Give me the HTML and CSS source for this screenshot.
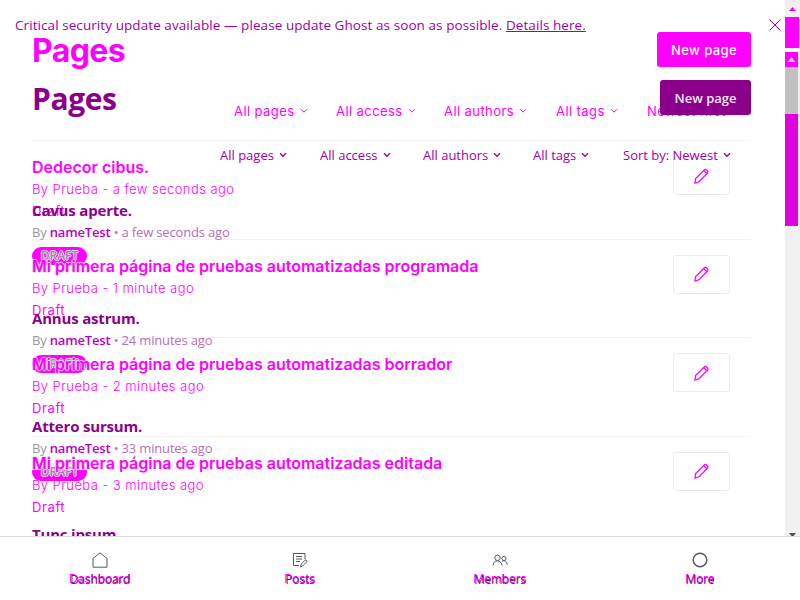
FILE: index.html
```html
<!DOCTYPE html>
<html lang="en">
<head>
<meta charset="utf-8">
<title>Pages</title>
<link rel="stylesheet" href="styles.css">
</head>
<body>
<svg class="defs" width="0" height="0">
  <symbol id="chev" viewBox="0 0 8 6"><path d="M1 1.2 4 4.2 7 1.2"/></symbol>
  <symbol id="pen" viewBox="0 0 18 18"><path d="M2 16l.6-4.500L11.500 2.800c1.200-1.200 4.500 1.800 3.200 3.200L6 14.800zM10.700 3.600 14 6.800"/></symbol>
</svg>
<main class="stage">
  <section class="layer old">
    <header class="head"><h1>Pages</h1><button class="new">New page</button></header>
    <nav class="filters">
      <span>All pages<svg><use href="#chev"/></svg></span>
      <span>All access<svg><use href="#chev"/></svg></span>
      <span>All authors<svg><use href="#chev"/></svg></span>
      <span>All tags<svg><use href="#chev"/></svg></span>
      <span>Newest first</span>
    </nav>
    <ul class="rows">
      <li><div><h3>Dedecor cibus.</h3><p>By Prueba - a few seconds ago</p><p class="state">Draft</p></div><a class="edit"><svg><use href="#pen"/></svg></a></li>
      <li><div><h3><span>Mi prim</span>era página de pruebas automatizadas programada</h3><p>By Prueba - 1 minute ago</p><p class="state">Draft</p></div><a class="edit"><svg><use href="#pen"/></svg></a></li>
      <li><div><h3><span>Mi prim</span>era página de pruebas automatizadas borrador</h3><p>By Prueba - 2 minutes ago</p><p class="state">Draft</p></div><a class="edit"><svg><use href="#pen"/></svg></a></li>
      <li><div><h3><span>Mi prim</span>era página de pruebas automatizadas editada</h3><p>By Prueba - 3 minutes ago</p><p class="state">Draft</p></div><a class="edit"><svg><use href="#pen"/></svg></a></li>
    </ul>
  </section>
  <section class="layer fresh">
    <div class="alert"><p>Critical security update available — please update Ghost as soon as possible. <a>Details here.</a></p><svg class="close" viewBox="0 0 12 12"><path d="M.5.5l11 11M11.5.5l-11 11"/></svg></div>
    <header class="head"><h1>Pages</h1><button class="new">New page</button></header>
    <nav class="filters">
      <span>All pages<svg><use href="#chev"/></svg></span>
      <span>All access<svg><use href="#chev"/></svg></span>
      <span>All authors<svg><use href="#chev"/></svg></span>
      <span>All tags<svg><use href="#chev"/></svg></span>
      <span>Sort by: Newest<svg><use href="#chev"/></svg></span>
    </nav>
    <ul class="rows">
      <li><h3>Cavus aperte.</h3><p>By <b>nameTest</b> <i>• a few seconds ago</i></p><em class="pill">DRAFT</em></li>
      <li><h3>Annus astrum.</h3><p>By <b>nameTest</b> <i>• 24 minutes ago</i></p><em class="pill">DRAFT</em></li>
      <li><h3>Attero sursum.</h3><p>By <b>nameTest</b> <i>• 33 minutes ago</i></p><em class="pill low">DRAFT</em></li>
      <li><h3>Tunc ipsum.</h3></li>
    </ul>
  </section>
  <aside class="scroll">
    <svg class="up" viewBox="0 0 15 17"><path d="M4 11h7L7.500 7z"/></svg>
    <div class="thumb-a"></div>
    <svg class="up2" viewBox="0 0 13 15"><path d="M2.500 10h8L6.500 5z"/></svg>
    <div class="thumb-b"></div>
    <div class="thumb-c"></div>
    <svg class="down" viewBox="0 0 15 3"><path d="M4 0h7L8.500 3h-2z"/></svg>
  </aside>
</main>
<footer class="tabs">
  <div class="tab"><svg viewBox="0 0 16 16"><path d="M1 6.500 8 .8l7 5.700v8.700H1z"/></svg><div class="label"><span>Dashboard</span><span>Dashboard</span></div></div>
  <div class="tab"><svg viewBox="0 0 16 16"><path d="M7 13.500H1.500V1.500H13v6M4 4.500h6M4 7h6M4 9.500h4M8.500 15l.7-3 4-3.800c1-.7 2.300.8 1.400 1.800l-4 4z"/></svg><div class="label"><span>Posts</span><span>Posts</span></div></div>
  <div class="tab"><svg viewBox="0 0 16 16"><circle cx="5.500" cy="5.800" r="2.700"/><circle cx="12" cy="6.500" r="2.100"/><path d="M1 13.500C1.200 7.300 9.500 7.300 10 13.500M10 9.300c2.600-1.400 5.100.3 5.200 3.500"/></svg><div class="label"><span>Members</span><span>Members</span></div></div>
  <div class="tab more"><svg viewBox="0 0 16 16"><circle cx="8" cy="8" r="6.800"/></svg><div class="label"><span>More</span><span>More</span></div></div>
</footer>
</body>
</html>
```
FILE: styles.css
```css
* { box-sizing: border-box; margin: 0; padding: 0; }
body { width: 800px; height: 600px; overflow: hidden; background: #fff; display: flex; flex-direction: column; }
.defs { display: block; height: 0; }
svg { fill: none; stroke: currentColor; }
.stage { height: 536px; overflow: hidden; display: grid; grid-template-columns: 785px 15px; grid-template-rows: 536px; }
.layer { grid-area: 1 / 1; overflow: hidden; white-space: nowrap; }
.scroll { grid-area: 1 / 2; }
ul { list-style: none; }
button { border: 0; border-radius: 3px; height: 35px; }
.head { display: flex; justify-content: space-between; height: 35px; margin: 0 34px 0 32px; }
.head h1 { line-height: 35px; }
.filters { display: grid; line-height: 20px; }
.filters span { display: flex; align-items: center; gap: 5px; }
.filters svg { width: 8px; height: 6px; }

.old { color: #f0f; font-family: Inter, sans-serif; padding-top: 32px; }
.old h1 { font-size: 32px; font-weight: 700; letter-spacing: -.6px; line-height: 37px; }
.old .new { width: 94px; background: #f0f; color: #fff; font: 500 13px Inter, sans-serif; letter-spacing: .4px; }
.old .filters { margin: 34px 0 0 234px; grid-template-columns: 102px 108px 112px 91px 100px; font-size: 13px; letter-spacing: .42px; }
.old .rows { margin: 19px 34px 0 32px; }
.old li { height: 98.65px; border-top: 1px solid #f2f2f3; display: flex; justify-content: space-between; padding: 15px 21px 0 0; }
.old li > div { margin-top: -1px; }
.old h3 { position: relative; z-index: 1; font-size: 16px; font-weight: 600; line-height: 24px; }
.old h3 span { text-shadow: 1px 0 1px #ddd, -1px 0 1px #ddd, 0 1px 1px #ddd, 0 -1px 1px #ddd; }
.old p { font-size: 13px; font-weight: 300; line-height: 20px; letter-spacing: .43px; }
.old .state { font-weight: 400; line-height: 24px; letter-spacing: .6px; }
.edit { width: 57px; height: 39px; border: 1px solid #ebebeb; border-radius: 3px; display: flex; align-items: center; justify-content: center; }
.edit svg { width: 18px; height: 18px; stroke-width: 1.3; }

.fresh { color: #8b008b; font-family: "Open Sans", "Noto Sans", sans-serif; }
.fresh h3 { position: relative; z-index: 2; font-size: 15px; font-weight: 700; line-height: 20px; letter-spacing: -.18px; }
.fresh p { font-size: 13px; font-weight: 400; line-height: 20px; color: #999; margin-top: 2px; letter-spacing: -.17px; }
.fresh .alert { height: 80px; padding: 15px 4px 0 15px; display: flex; justify-content: space-between; }
.fresh .alert p { margin: 0; font-size: 13.5px; letter-spacing: .075px; color: #a000a5; }
.alert a { text-decoration: underline; }
.close { width: 12px; height: 12px; margin-top: 4px; color: #b000b4; }
.fresh h1 { font-size: 30px; font-weight: 700; letter-spacing: -.4px; line-height: 37px; }
.fresh .new { width: 91px; background: #8b008b; color: #f8e8f8; font: 600 13px "Open Sans", sans-serif; }
.fresh .filters { margin: 30px 0 0 220px; grid-template-columns: 100px 103px 110px 90px 120px; font-size: 13px; font-weight: 500; color: #a000a5; }
.fresh .filters svg { stroke-width: 1.4; }
.fresh .rows { margin: 35px 0 0 32px; }
.fresh li { height: 108px; }
.fresh b { color: #b800c8; font-weight: 600; }
.fresh i { font-style: normal; color: #b56fb5; }
.pill { display: block; margin-top: 5px; width: 55px; height: 18px; border-radius: 9px; background: #f0f; color: #b577b5; text-align: center; font: normal 600 12px/18px "Open Sans", sans-serif; text-shadow: 1px 0 #ddd, -1px 0 #ddd, 0 1px #ddd, 0 -1px #ddd; }
.low { background: linear-gradient(#eee 7px, #f0f 7px); }

.scroll { background: #f0f0f0; }
.scroll svg { display: block; stroke: none; width: 15px; }
.up { height: 17px; fill: #f0f; }
.thumb-a { height: 35px; background: #f0f; border-bottom: 4px solid #fff; width: 14px; }
.scroll .up2 { width: 13px; height: 15px; background: #f0f; fill: #c1c1c1; }
.thumb-b { height: 47px; width: 13px; background: #c1c1c1; }
.thumb-c { height: 112px; width: 13px; background: #e000e0; }
.scroll .down { height: 3px; fill: #505050; margin-top: 307px; }

.tabs { height: 64px; border-top: 1px solid #dcdee2; background: #fff; display: grid; grid-template-columns: repeat(4, 1fr); }
.tab { display: flex; flex-direction: column; align-items: center; padding-top: 15px; color: #555a62; }
.tab svg { width: 16px; height: 16px; }
.more svg { stroke-width: 1.5; }
.label { display: grid; justify-items: center; margin-top: 2px; line-height: 18px; font-size: 12px; }
.label span { grid-area: 1 / 1; font-family: Inter, sans-serif; color: #f0f; }
.label span + span { font-family: "Open Sans", sans-serif; color: #70207a; letter-spacing: -.25px; padding-top: 1px; }
```
